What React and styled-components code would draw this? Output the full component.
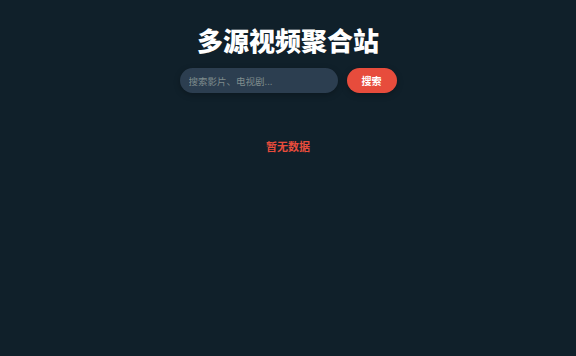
import React from "react";
import styled, { createGlobalStyle } from "styled-components";

const GlobalStyle = createGlobalStyle`
  html, body {
    margin: 0;
    padding: 0;
    background: #10202a;
    font-family: "Noto Sans CJK SC", "Noto Sans", sans-serif;
  }
`;

const Page = styled.div`
  min-height: 356px;
  display: flex;
  flex-direction: column;
  align-items: center;
  padding-top: 22px;
  box-sizing: border-box;
  background: #10202a;
`;

const Title = styled.h1`
  margin: 0;
  color: #ffffff;
  font-size: 26px;
  font-weight: 900;
  line-height: 36px;
  letter-spacing: 0;
`;

const SearchRow = styled.div`
  display: flex;
  gap: 9px;
  margin-top: 10px;
`;

const SearchInput = styled.input`
  width: 158px;
  height: 25px;
  box-sizing: border-box;
  border: none;
  border-radius: 13px;
  background: #2c3e50;
  color: #ecf0f1;
  padding: 0 9px;
  font-family: inherit;
  font-size: 9.5px;
  outline: none;
  box-shadow: 0 2px 6px rgba(0, 0, 0, 0.25);

  &::placeholder {
    color: #7f8c8d;
  }
`;

const SearchButton = styled.button`
  width: 50px;
  height: 25px;
  border: none;
  border-radius: 13px;
  background: #e74c3c;
  color: #ffffff;
  font-family: inherit;
  font-size: 10px;
  font-weight: 700;
  cursor: pointer;
  box-shadow: 0 2px 6px rgba(0, 0, 0, 0.25);
`;

const Empty = styled.div`
  margin-top: 45px;
  color: #e74c3c;
  font-size: 11px;
  font-weight: 700;
`;

const App = () => (
  <>
    <GlobalStyle />
    <Page>
      <Title>多源视频聚合站</Title>
      <SearchRow>
        <SearchInput placeholder="搜索影片、电视剧..." />
        <SearchButton>搜索</SearchButton>
      </SearchRow>
      <Empty>暂无数据</Empty>
    </Page>
  </>
);

export default App;
